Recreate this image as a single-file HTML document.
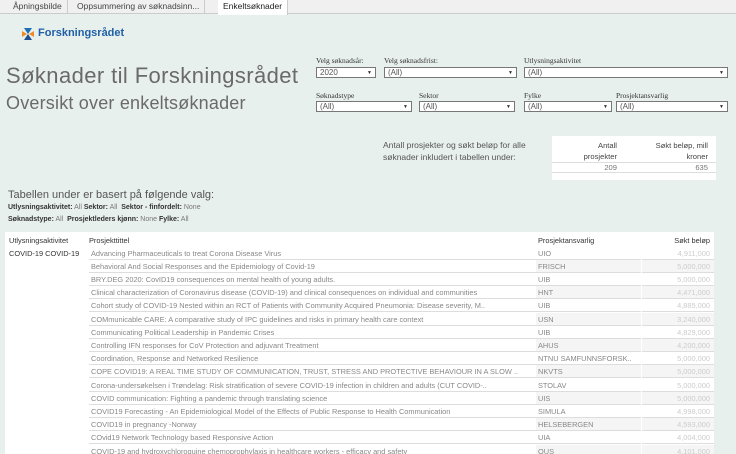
<!DOCTYPE html>
<html><head><meta charset="utf-8"><style>
*{margin:0;padding:0;box-sizing:border-box}
html,body{width:736px;height:454px;overflow:hidden}
body{background:#e8f0ee;font-family:"Liberation Sans",sans-serif;position:relative;color:#333}
.tabs{position:absolute;left:0;top:0;width:736px;height:14px;background:#f0f0f0;border-bottom:1px solid #ccc;font-size:8.5px}
.tab{position:absolute;top:0;height:14px;line-height:13px;padding:0 5px;color:#444;border-right:1px solid #ccc}
.tab.act{background:#fff;color:#222;height:15px}
.abs{position:absolute;white-space:nowrap}
.h1{font-size:22px;color:#6a6a6a;letter-spacing:.4px}
.h2{font-size:18px;color:#6a6a6a;letter-spacing:.2px}
.lbl{font-family:"Liberation Serif",serif;font-size:7.5px;color:#333}
.sel{position:absolute;height:11px;background:#fff;border:1px solid #777;font-size:8px;line-height:9px;padding-left:3px;color:#555}
.sel:after{content:"▼";position:absolute;right:3px;top:1px;font-size:5px;color:#333}
.tbl{position:absolute;left:5px;top:232px;width:709px;height:222px;background:#fff;overflow:hidden}
.row{position:absolute;left:0;width:709px;height:13.2px;font-size:7.4px;line-height:13px;color:#888}
.row span{position:absolute;white-space:nowrap;overflow:hidden;height:13.2px}
.t{left:84px;width:448px;border-bottom:1px solid #ddd;padding-left:2px}
.p{left:531px;width:105px;border-bottom:1px solid #ddd;padding-left:2px}
.a{left:637px;width:72px;text-align:right;padding-right:4px;color:#ccc;border-bottom:1px solid #ddd}
.g .p,.g .a{background:#f5f5f5}
</style></head><body>
<div class="tabs">
<div class="tab" style="left:8px">Åpningsbilde</div>
<div class="tab" style="left:72px">Oppsummering av søknadsinn...</div>
<div class="tab act" style="left:218px">Enkeltsøknader</div>
</div>
<svg class="abs" style="left:21px;top:27px" width="14" height="14" viewBox="0 0 14 14"><path d="M1 4 L6 7 L1 10 Z" fill="#f08a24"/><path d="M13 4 L8 7 L13 10 Z" fill="#f08a24"/><path d="M3 1 L11 1 L7 7 Z" fill="#1f6fb2"/><path d="M3 13 L11 13 L7 7 Z" fill="#1f4f8f"/></svg>
<div class="abs" style="left:38px;top:27px;font-size:11px;color:#1e5fa6;font-weight:bold">Forskningsrådet</div>
<div class="abs h1" style="left:6px;top:63px">Søknader til Forskningsrådet</div>
<div class="abs h2" style="left:6px;top:93px">Oversikt over enkeltsøknader</div>

<div class="abs lbl" style="left:316px;top:56px">Velg søknadsår:</div>
<div class="sel" style="left:316px;top:67px;width:60px">2020</div>
<div class="abs lbl" style="left:384px;top:56px">Velg søknadsfrist:</div>
<div class="sel" style="left:384px;top:67px;width:133px">(All)</div>
<div class="abs lbl" style="left:524px;top:56px">Utlysningsaktivitet</div>
<div class="sel" style="left:524px;top:67px;width:204px">(All)</div>
<div class="abs lbl" style="left:316px;top:91px">Søknadstype</div>
<div class="sel" style="left:316px;top:101px;width:96px">(All)</div>
<div class="abs lbl" style="left:419px;top:91px">Sektor</div>
<div class="sel" style="left:419px;top:101px;width:96px">(All)</div>
<div class="abs lbl" style="left:524px;top:91px">Fylke</div>
<div class="sel" style="left:524px;top:101px;width:88px">(All)</div>
<div class="abs lbl" style="left:616px;top:91px">Prosjektansvarlig</div>
<div class="sel" style="left:616px;top:101px;width:112px">(All)</div>

<div class="abs" style="left:383px;top:139px;font-size:8.5px;line-height:12px;color:#555">Antall prosjekter og søkt beløp for alle<br>søknader inkludert i tabellen under:</div>
<div class="abs" style="left:552px;top:136px;width:164px;height:44px;background:#fff;font-size:7.6px;color:#444">
<div class="abs" style="right:99px;top:4px;text-align:right;line-height:11px">Antall<br>prosjekter</div>
<div class="abs" style="right:8px;top:4px;text-align:right;line-height:11px">Søkt beløp, mill<br>kroner</div>
<div class="abs" style="left:0;top:26px;width:164px;border-top:1px solid #ddd;border-bottom:1px solid #ddd;height:11px"></div>
<div class="abs" style="right:99px;top:26px;color:#777;line-height:11px">209</div>
<div class="abs" style="right:8px;top:26px;color:#777;line-height:11px">635</div>
</div>

<div class="abs" style="left:8px;top:189px;font-size:11px;color:#555">Tabellen under er basert på følgende valg:</div>
<div class="abs" style="left:8px;top:204px;font-size:7px;color:#333"><b>Utlysningsaktivitet:</b> <span style="color:#777">All</span> <b>Sektor:</b> <span style="color:#777">All</span>&nbsp; <b>Sektor - finfordelt:</b> <span style="color:#777">None</span></div>
<div class="abs" style="left:8px;top:216px;font-size:7px;color:#333"><b>Søknadstype:</b> <span style="color:#777">All</span>&nbsp; <b>Prosjektleders kjønn:</b> <span style="color:#777">None</span> <b>Fylke:</b> <span style="color:#777">All</span></div>

<div class="tbl">
<div class="row" style="top:1.5px;color:#333"><span style="left:4px">Utlysningsaktivitet</span><span style="left:84px">Prosjekttittel</span><span style="left:533px">Prosjektansvarlig</span><span style="left:637px;width:68px;text-align:right">Søkt beløp</span></div>
<div class="abs" style="left:4px;top:14.5px;font-size:7.4px;line-height:13px;color:#333">COVID-19 COVID-19</div>
<div class="row" style="top:14.5px"><span class="t">Advancing Pharmaceuticals to treat Corona Disease Virus</span><span class="p">UIO</span><span class="a">4,911,000</span></div>
<div class="row g" style="top:27.7px"><span class="t">Behavioral And Social Responses and the Epidemiology of Covid-19</span><span class="p">FRISCH</span><span class="a">5,000,000</span></div>
<div class="row" style="top:40.9px"><span class="t">BRY.DEG 2020: CovID19 consequences on mental health of young adults.</span><span class="p">UIB</span><span class="a">5,000,000</span></div>
<div class="row g" style="top:54.1px"><span class="t">Clinical characterization of Coronavirus disease (COVID-19) and clinical consequences on individual and communities</span><span class="p">HNT</span><span class="a">4,471,000</span></div>
<div class="row" style="top:67.3px"><span class="t">Cohort study of COVID-19 Nested within an RCT of Patients with Community Acquired Pneumonia: Disease severity, M..</span><span class="p">UIB</span><span class="a">4,885,000</span></div>
<div class="row g" style="top:80.5px"><span class="t">COMmunicable CARE: A comparative study of IPC guidelines and risks in primary health care context</span><span class="p">USN</span><span class="a">3,240,000</span></div>
<div class="row" style="top:93.7px"><span class="t">Communicating Political Leadership in Pandemic Crises</span><span class="p">UIB</span><span class="a">4,829,000</span></div>
<div class="row g" style="top:106.9px"><span class="t">Controlling IFN responses for CoV Protection and adjuvant Treatment</span><span class="p">AHUS</span><span class="a">4,200,000</span></div>
<div class="row" style="top:120.1px"><span class="t">Coordination, Response and Networked Resilience</span><span class="p">NTNU SAMFUNNSFORSK..</span><span class="a">5,000,000</span></div>
<div class="row g" style="top:133.3px"><span class="t">COPE COVID19: A REAL TIME STUDY OF COMMUNICATION, TRUST, STRESS AND PROTECTIVE BEHAVIOUR IN A SLOW ..</span><span class="p">NKVTS</span><span class="a">5,000,000</span></div>
<div class="row" style="top:146.5px"><span class="t">Corona-undersøkelsen i Trøndelag: Risk stratification of severe COVID-19 infection in children and adults (CUT COVID-..</span><span class="p">STOLAV</span><span class="a">5,000,000</span></div>
<div class="row g" style="top:159.7px"><span class="t">COVID communication: Fighting a pandemic through translating science</span><span class="p">UIS</span><span class="a">5,000,000</span></div>
<div class="row" style="top:172.9px"><span class="t">COVID19 Forecasting - An Epidemiological Model of the Effects of Public Response to Health Communication</span><span class="p">SIMULA</span><span class="a">4,998,000</span></div>
<div class="row g" style="top:186.1px"><span class="t">COVID19 in pregnancy -Norway</span><span class="p">HELSEBERGEN</span><span class="a">4,593,000</span></div>
<div class="row" style="top:199.3px"><span class="t">COvid19 Network Technology based Responsive Action</span><span class="p">UIA</span><span class="a">4,004,000</span></div>
<div class="row g" style="top:212.5px"><span class="t">COVID-19 and hydroxychloroquine chemoprophylaxis in healthcare workers - efficacy and safety</span><span class="p">OUS</span><span class="a">4,101,000</span></div>
</div>
</body></html>
